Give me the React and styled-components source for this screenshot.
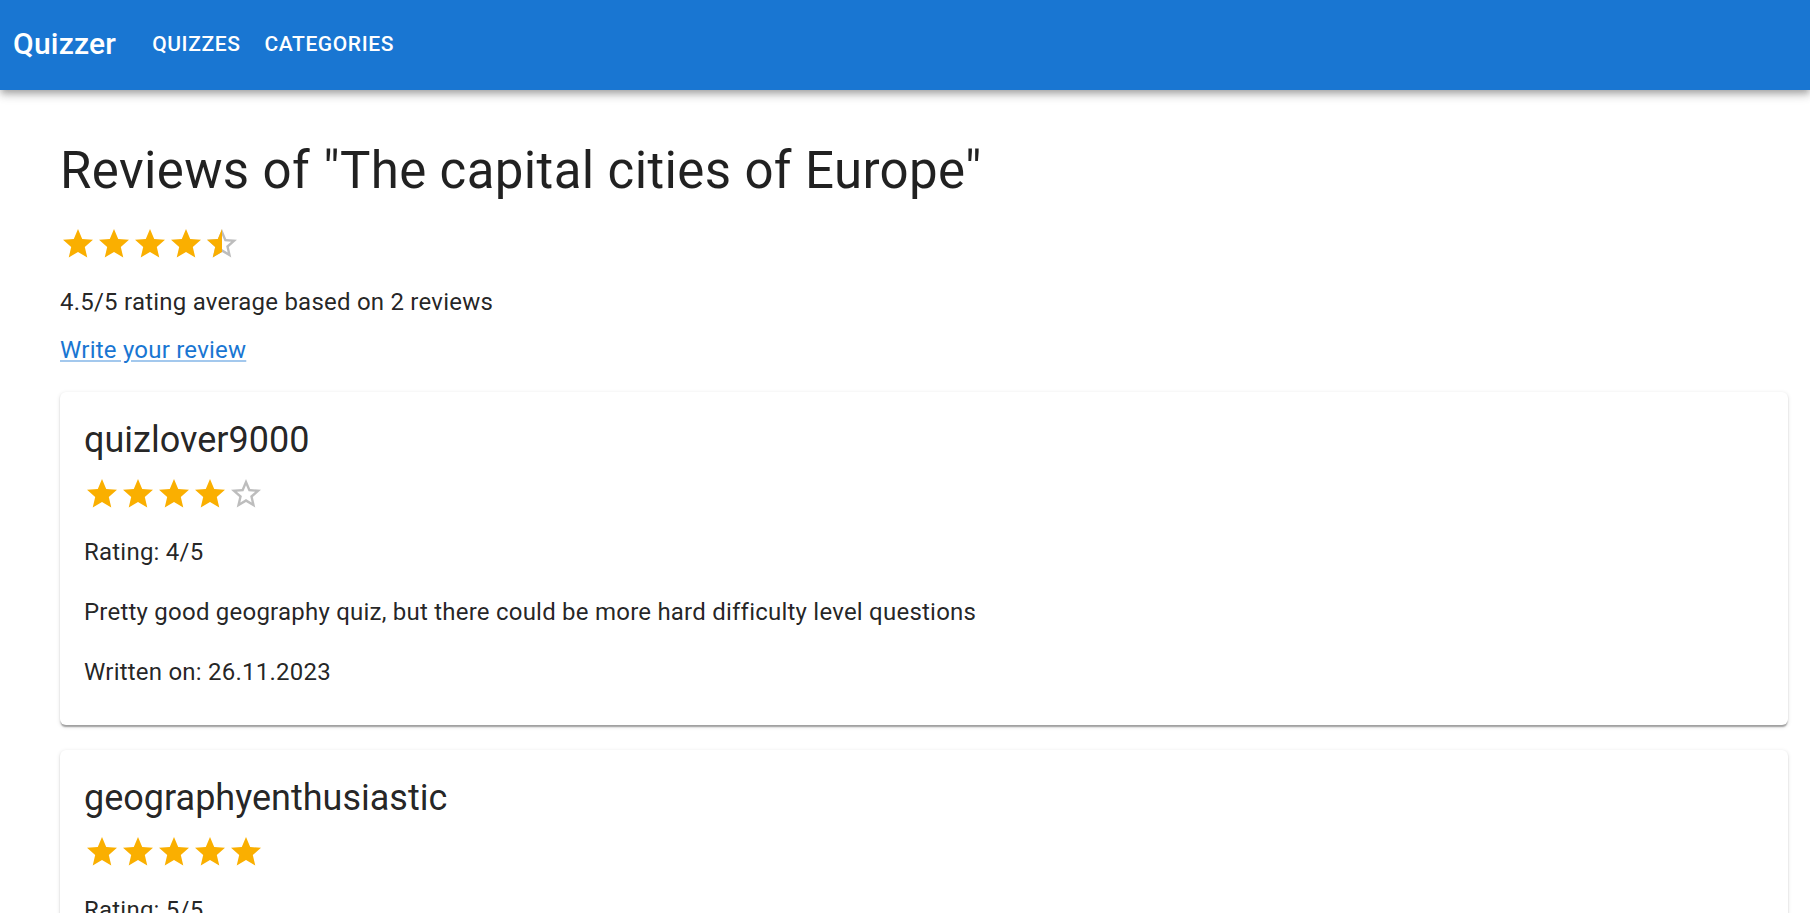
import styled, { createGlobalStyle } from "styled-components";

const GlobalStyle = createGlobalStyle`
  body {
    margin: 0;
    background: #fff;
    font-family: Roboto, "Helvetica Neue", Arial, sans-serif;
    color: rgba(0, 0, 0, 0.87);
  }
`;

const STAR =
  "M12 17.27L18.18 21l-1.64-7.03L22 9.24l-7.19-.61L12 2 9.19 8.63 2 9.24l5.46 4.73L5.82 21z";
const STAR_BORDER =
  "M22 9.24l-7.19-.62L12 2 9.19 8.63 2 9.24l5.46 4.73L5.82 21 12 17.27 18.18 21l-1.63-7.03L22 9.24zM12 15.4l-3.76 2.27 1-4.28-3.32-2.88 4.38-.38L12 6.1l1.71 4.04 4.38.38-3.32 2.88 1 4.28L12 15.4z";

const reviews = [
  {
    user: "quizlover9000",
    rating: 4,
    text: "Pretty good geography quiz, but there could be more hard difficulty level questions",
    date: "26.11.2023",
  },
  {
    user: "geographyenthusiastic",
    rating: 5,
    text: "Great quiz, learned a lot about European capitals",
    date: "27.11.2023",
  },
];

const Star = ({ fill, id }) => {
  if (fill >= 1) {
    return (
      <StarSvg viewBox="0 0 24 24">
        <path d={STAR} fill="#faaf00" />
      </StarSvg>
    );
  }
  if (fill > 0) {
    return (
      <StarSvg viewBox="0 0 24 24">
        <defs>
          <clipPath id={id}>
            <rect x="0" y="0" width={24 * fill} height="24" />
          </clipPath>
        </defs>
        <path d={STAR_BORDER} fill="rgba(0,0,0,0.26)" />
        <path d={STAR} fill="#faaf00" clipPath={`url(#${id})`} />
      </StarSvg>
    );
  }
  return (
    <StarSvg viewBox="0 0 24 24">
      <path d={STAR_BORDER} fill="rgba(0,0,0,0.26)" />
    </StarSvg>
  );
};

const Rating = ({ value, name }) => (
  <Stars>
    {[1, 2, 3, 4, 5].map(i => (
      <Star key={i} id={`${name}-${i}`} fill={Math.max(0, Math.min(1, value - i + 1))} />
    ))}
  </Stars>
);

const App = () => {
  return (
    <>
      <GlobalStyle />
      <AppBar>
        <Brand>Quizzer</Brand>
        <NavButton>Quizzes</NavButton>
        <NavButton>Categories</NavButton>
      </AppBar>
      <Main>
        <Title>Reviews of "The capital cities of Europe"</Title>
        <Rating value={4.5} name="avg" />
        <Summary>4.5/5 rating average based on 2 reviews</Summary>
        <WriteLink href="#">Write your review</WriteLink>
        <List>
          {reviews.map(r => (
            <Card key={r.user}>
              <User>{r.user}</User>
              <Rating value={r.rating} name={r.user} />
              <CardText>Rating: {r.rating}/5</CardText>
              <CardText>{r.text}</CardText>
              <CardText>Written on: {r.date}</CardText>
            </Card>
          ))}
        </List>
      </Main>
    </>
  );
};

export default App;

const AppBar = styled.header`
  height: 90px;
  box-sizing: border-box;
  display: flex;
  align-items: center;
  padding: 0 0 2px 13px;
  background-color: #1976d2;
  color: #fff;
  box-shadow: 0px 3px 6px -1.5px rgba(0, 0, 0, 0.2),
    0px 6px 7.5px 0px rgba(0, 0, 0, 0.14), 0px 1.5px 15px 0px rgba(0, 0, 0, 0.12);
  position: relative;
  z-index: 2;
`;

const Brand = styled.div`
  font-size: 30px;
  font-weight: 500;
  letter-spacing: 0.0075em;
  line-height: 1.6;
  margin-right: 24px;
`;

const NavButton = styled.button`
  background: none;
  border: 0;
  color: #fff;
  font-family: Roboto, sans-serif;
  font-size: 21px;
  font-weight: 500;
  letter-spacing: 0.02857em;
  text-transform: uppercase;
  line-height: 1.75;
  padding: 9px 12px;
  border-radius: 6px;
  cursor: pointer;
`;

const Main = styled.main`
  padding: 50px 22px 40px 60px;
  display: flex;
  flex-direction: column;
  align-items: flex-start;
`;

const Title = styled.h1`
  margin: 0 0 23px;
  font-size: 51px;
  font-weight: 400;
  line-height: 1.235;
  letter-spacing: 0.00735em;
`;

const Stars = styled.div`
  display: flex;
  height: 36px;
`;

const StarSvg = styled.svg`
  width: 36px;
  height: 36px;
  flex-shrink: 0;
`;

const Summary = styled.p`
  margin: 22px 0 12px;
  font-size: 24px;
  line-height: 1.5;
  letter-spacing: 0.00938em;
`;

const WriteLink = styled.a`
  font-size: 24px;
  line-height: 1.5;
  letter-spacing: 0.00938em;
  color: #1976d2;
  text-decoration: underline;
  text-decoration-color: rgba(25, 118, 210, 0.4);
  margin-bottom: 24px;
`;

const List = styled.div`
  align-self: stretch;
  display: flex;
  flex-direction: column;
  gap: 25px;
`;

const Card = styled.div`
  background: #fff;
  border-radius: 6px;
  padding: 24px 24px 35px;
  box-shadow: 0px 3px 1.5px -1.5px rgba(0, 0, 0, 0.2),
    0px 1.5px 1.5px 0px rgba(0, 0, 0, 0.14), 0px 1.5px 4.5px 0px rgba(0, 0, 0, 0.12);
`;

const User = styled.h2`
  margin: 0 0 12px;
  font-size: 36px;
  font-weight: 400;
  line-height: 1.334;
`;

const CardText = styled.p`
  margin: 22px 0 0;
  font-size: 24px;
  line-height: 1.5;
  letter-spacing: 0.00938em;

  & + & {
    margin-top: 24px;
  }
`;
